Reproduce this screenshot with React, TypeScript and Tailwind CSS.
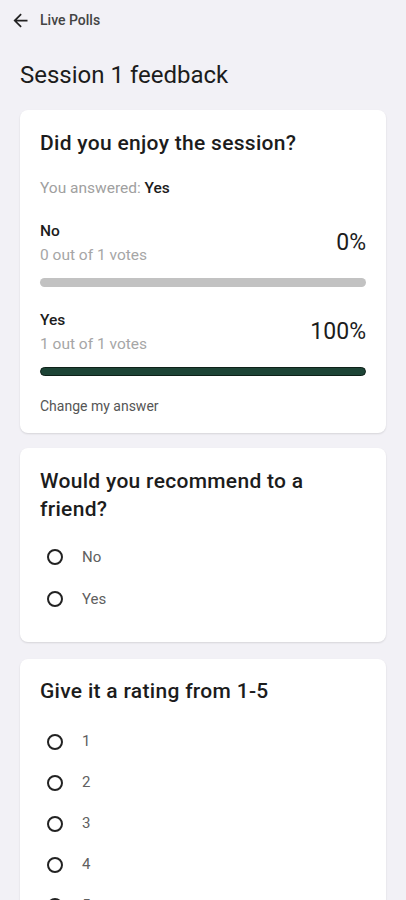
type Result = { label: string; votes: number; total: number };

const RESULTS: Result[] = [
  { label: 'No', votes: 0, total: 1 },
  { label: 'Yes', votes: 1, total: 1 },
];

function BackArrow() {
  return (
    <svg viewBox="0 0 24 24" className="w-[21px] h-[21px]" fill="#222">
      <path d="M20 11H7.83l5.59-5.59L12 4l-8 8 8 8 1.41-1.41L7.83 13H20v-2z" />
    </svg>
  );
}

function Radio({ label, rowClass }: { label: string; rowClass: string }) {
  return (
    <div className={`flex items-center ${rowClass}`}>
      <span className="ml-[7px] w-4 h-4 rounded-full border-2 border-[#222]" />
      <span className="ml-[19px] text-[15px] text-[#606060]">{label}</span>
    </div>
  );
}

function Card({ children, className = '' }: { children: React.ReactNode; className?: string }) {
  return (
    <div className={`bg-white rounded-lg shadow-[0_1px_2px_rgba(0,0,0,0.12)] px-5 ${className}`}>
      {children}
    </div>
  );
}

export default function App() {
  return (
    <div
      className="bg-[#f2f1f6] text-[#1c1c1c] overflow-hidden h-[900px]"
      style={{ fontFamily: 'Roboto, "Noto Sans", sans-serif' }}
    >
      {/* Top bar */}
      <div className="h-10 flex items-center pl-[10px]">
        <BackArrow />
        <span className="ml-[9px] text-[14px] font-medium text-[#444]">Live Polls</span>
      </div>

      <div className="px-5">
        <h1 className="mt-[19px] text-[24px] leading-8 text-[#1c1c1c]">Session 1 feedback</h1>

        {/* Poll with results */}
        <Card className="mt-[19px] pt-[19px] pb-[17px]">
          <h2 className="text-[21px] leading-7 font-medium tracking-[0.3px]">Did you enjoy the session?</h2>
          <p className="mt-[21px] text-[15.5px] leading-5 text-[#a0a0a0]">
            You answered: <span className="font-medium text-[#1c1c1c]">Yes</span>
          </p>

          {RESULTS.map((r) => {
            const pct = Math.round((r.votes / r.total) * 100);
            return (
              <div key={r.label} className="mt-[23px]">
                <div className="flex items-center justify-between">
                  <div>
                    <div className="text-[15.5px] leading-5 font-medium">{r.label}</div>
                    <div className="mt-1 text-[15.5px] leading-5 text-[#a6a6a6]">
                      {r.votes} out of {r.total} votes
                    </div>
                  </div>
                  <span className="text-[23px] leading-7">{pct}%</span>
                </div>
                <div className="mt-[13px] h-[9px] rounded-full bg-[#c2c2c2] overflow-hidden">
                  {pct > 0 && (
                    <div
                      className="h-full rounded-full bg-[#1d4436] border border-[#0e2119]"
                      style={{ width: `${pct}%` }}
                    />
                  )}
                </div>
              </div>
            );
          })}

          <p className="mt-5 text-[14px] leading-5 text-[#555]">Change my answer</p>
        </Card>

        {/* Open polls */}
        <Card className="mt-[15px] pt-[19px] pb-[22px]">
          <h2 className="text-[21px] leading-7 font-medium tracking-[0.3px]">Would you recommend to a friend?</h2>
          <div className="mt-[13px]">
            {['No', 'Yes'].map((o) => (
              <Radio key={o} label={o} rowClass="h-[42px]" />
            ))}
          </div>
        </Card>

        <Card className="mt-[17px] pt-[18px] pb-6">
          <h2 className="text-[21px] leading-7 font-medium tracking-[0.3px]">Give it a rating from 1-5</h2>
          <div className="mt-4">
            {['1', '2', '3', '4', '5'].map((o) => (
              <Radio key={o} label={o} rowClass="h-[41px]" />
            ))}
          </div>
        </Card>
      </div>
    </div>
  );
}
